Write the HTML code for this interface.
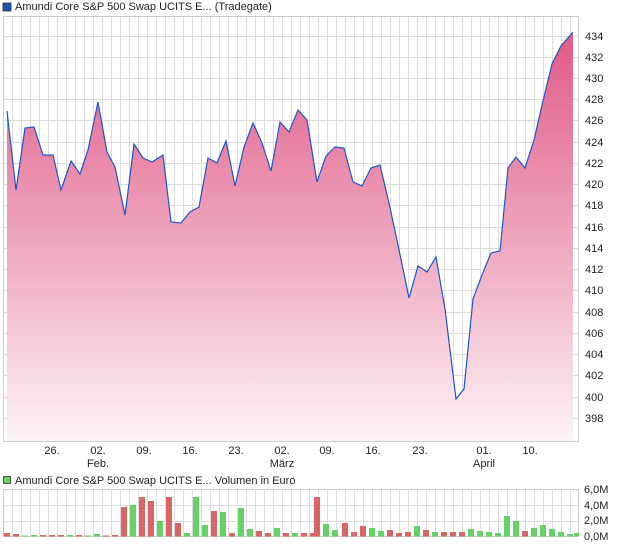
<!DOCTYPE html>
<html><head><meta charset="utf-8"><style>
html,body{margin:0;padding:0;background:#fff;}
svg{display:block;font-family:"Liberation Sans",Arial,sans-serif;}
</style></head><body>
<svg width="620" height="546" viewBox="0 0 620 546" xmlns="http://www.w3.org/2000/svg">
<defs>
<pattern id="vg" x="3" y="0" width="9" height="600" patternUnits="userSpaceOnUse">
<rect x="0" y="0" width="1" height="600" fill="#dcdcdc"/></pattern>
<linearGradient id="fg" x1="0" y1="32" x2="0" y2="441" gradientUnits="userSpaceOnUse">
<stop offset="0" stop-color="#e05a88"/><stop offset="0.5" stop-color="#eea4bd"/><stop offset="1" stop-color="#fdf3f6"/></linearGradient>
</defs>
<rect x="3" y="15" width="8" height="8" fill="#1f4fb0" stroke="#333" stroke-width="0.8" transform="translate(0,-12)"/>
<text x="15" y="10" font-size="11" fill="#222">Amundi Core S&amp;P 500 Swap UCITS E... (Tradegate)</text>
<!-- price plot -->
<rect x="3" y="16" width="576" height="426" fill="url(#vg)"/>
<g stroke="#dcdcdc" stroke-width="1">
<line x1="3" y1="36.5" x2="579" y2="36.5"/><line x1="3" y1="57.5" x2="579" y2="57.5"/><line x1="3" y1="78.5" x2="579" y2="78.5"/><line x1="3" y1="99.5" x2="579" y2="99.5"/><line x1="3" y1="120.5" x2="579" y2="120.5"/><line x1="3" y1="142.5" x2="579" y2="142.5"/><line x1="3" y1="163.5" x2="579" y2="163.5"/><line x1="3" y1="184.5" x2="579" y2="184.5"/><line x1="3" y1="205.5" x2="579" y2="205.5"/><line x1="3" y1="227.5" x2="579" y2="227.5"/><line x1="3" y1="248.5" x2="579" y2="248.5"/><line x1="3" y1="269.5" x2="579" y2="269.5"/><line x1="3" y1="290.5" x2="579" y2="290.5"/><line x1="3" y1="312.5" x2="579" y2="312.5"/><line x1="3" y1="333.5" x2="579" y2="333.5"/><line x1="3" y1="354.5" x2="579" y2="354.5"/><line x1="3" y1="375.5" x2="579" y2="375.5"/><line x1="3" y1="397.5" x2="579" y2="397.5"/><line x1="3" y1="418.5" x2="579" y2="418.5"/>
</g>
<polygon fill="url(#fg)" points="7,441 7,111 16,190 25,128 34,127 43,155 53,155 61,190 71,161 80,174 88,150 98,102 107,152 115,167 125,215 134,144 143,158 152,162 163,155 171,222 181,223 190,212 199,207 208,158 217,163 226,141 235,186 244,147 253,123 262,143 271,171 280,122 289,132 298,110 307,120 317,182 326,156 335,147 344,148 353,182 362,186 371,168 380,165 389,203 398,245 409,298 418,266 427,272 436,257 445,309 456,399 464,389 473,299 482,275 491,253 500,251 508,168 516,157 525,168 534,140 543,101 552,64 561,46 573,32 573,441"/>
<polyline fill="none" stroke="#1f55c8" stroke-width="1.2" points="7,111 16,190 25,128 34,127 43,155 53,155 61,190 71,161 80,174 88,150 98,102 107,152 115,167 125,215 134,144 143,158 152,162 163,155 171,222 181,223 190,212 199,207 208,158 217,163 226,141 235,186 244,147 253,123 262,143 271,171 280,122 289,132 298,110 307,120 317,182 326,156 335,147 344,148 353,182 362,186 371,168 380,165 389,203 398,245 409,298 418,266 427,272 436,257 445,309 456,399 464,389 473,299 482,275 491,253 500,251 508,168 516,157 525,168 534,140 543,101 552,64 561,46 573,32"/>
<rect x="3.5" y="16.5" width="575" height="425" fill="none" stroke="#cccccc"/>
<g font-size="11" fill="#222">
<text x="585" y="40">434</text><text x="585" y="61">432</text><text x="585" y="82">430</text><text x="585" y="103">428</text><text x="585" y="124">426</text><text x="585" y="146">424</text><text x="585" y="167">422</text><text x="585" y="188">420</text><text x="585" y="209">418</text><text x="585" y="231">416</text><text x="585" y="252">414</text><text x="585" y="273">412</text><text x="585" y="294">410</text><text x="585" y="316">408</text><text x="585" y="337">406</text><text x="585" y="358">404</text><text x="585" y="379">402</text><text x="585" y="401">400</text><text x="585" y="422">398</text>
</g>
<g font-size="11" fill="#222" text-anchor="middle">
<text x="52" y="454">26.</text><text x="98" y="454">02.</text><text x="144" y="454">09.</text><text x="190" y="454">16.</text><text x="236" y="454">23.</text><text x="282" y="454">02.</text><text x="327" y="454">09.</text><text x="373" y="454">16.</text><text x="420" y="454">23.</text><text x="484" y="454">01.</text><text x="530" y="454">10.</text>
<text x="98" y="467">Feb.</text><text x="282" y="467">März</text><text x="484" y="467">April</text>
</g>
<!-- volume -->
<rect x="3.5" y="476.5" width="7" height="7" fill="#66d166" stroke="#333" stroke-width="0.8"/>
<text x="15" y="484" font-size="11" fill="#222">Amundi Core S&amp;P 500 Swap UCITS E... Volumen in Euro</text>
<rect x="3" y="490" width="576" height="47" fill="url(#vg)"/>
<g stroke="#dcdcdc"><line x1="3" y1="505.5" x2="579" y2="505.5"/><line x1="3" y1="521.5" x2="579" y2="521.5"/></g>
<g id="bars"></g>
<rect x="3.5" y="489.5" width="575" height="47" fill="none" stroke="#cccccc"/>
<g font-size="11" fill="#222">
<text x="584" y="493">6,0M</text><text x="584" y="509">4,0M</text><text x="584" y="524">2,0M</text><text x="584" y="540">0,0M</text>
</g>
<g>
<script>/*no-op*/</script>
</g>
<g fill="#d96666">
<rect x="4" y="533" width="6" height="3.5"/><rect x="13" y="534" width="6" height="2.5"/>
<rect x="40" y="535" width="6" height="1.5"/><rect x="49" y="535" width="6" height="1.5"/><rect x="58" y="535" width="6" height="1.5"/><rect x="76" y="535" width="6" height="1.5"/>
<rect x="103" y="535.5" width="6" height="1"/><rect x="112" y="535" width="6" height="1.5"/>
<rect x="121" y="507" width="6" height="29.5"/><rect x="139" y="497" width="6" height="39.5"/><rect x="148" y="501" width="6" height="35.5"/>
<rect x="166" y="497" width="6" height="39.5"/><rect x="175" y="523" width="6" height="13.5"/>
<rect x="211" y="511" width="6" height="25.5"/><rect x="229" y="533" width="6" height="3.5"/>
<rect x="256" y="531" width="6" height="5.5"/><rect x="265" y="533" width="6" height="3.5"/><rect x="283" y="533" width="6" height="3.5"/>
<rect x="301" y="533" width="6" height="3.5"/><rect x="310" y="533" width="6" height="3.5"/><rect x="314" y="497" width="6" height="39.5" fill="#d96666"/>
<rect x="342" y="523" width="6" height="13.5"/><rect x="351" y="532" width="6" height="4.5"/><rect x="360" y="526" width="6" height="10.5"/>
<rect x="387" y="530" width="6" height="6.5"/><rect x="396" y="533" width="6" height="3.5"/><rect x="405" y="532" width="6" height="4.5"/>
<rect x="423" y="530" width="6" height="6.5"/><rect x="441" y="532" width="6" height="4.5"/><rect x="450" y="532" width="6" height="4.5"/><rect x="459" y="532" width="6" height="4.5"/>
<rect x="522" y="531" width="6" height="5.5"/>
</g>
<g fill="#66d166">
<rect x="22" y="535.5" width="6" height="1"/><rect x="31" y="535" width="6" height="1.5"/><rect x="67" y="535" width="6" height="1.5"/>
<rect x="85" y="535.5" width="6" height="1"/><rect x="94" y="534" width="6" height="2.5"/>
<rect x="130" y="505" width="6" height="31.5"/><rect x="157" y="521" width="6" height="15.5"/><rect x="184" y="533" width="6" height="3.5"/>
<rect x="193" y="497" width="6" height="39.5"/><rect x="202" y="525" width="6" height="11.5"/><rect x="220" y="512" width="6" height="24.5"/>
<rect x="238" y="508" width="6" height="28.5"/><rect x="247" y="529" width="6" height="7.5"/><rect x="274" y="528" width="6" height="8.5"/>
<rect x="292" y="533" width="6" height="3.5"/>
<rect x="323" y="524" width="6" height="12.5"/><rect x="332" y="530" width="6" height="6.5"/>
<rect x="369" y="528" width="6" height="8.5"/><rect x="378" y="531" width="6" height="5.5"/><rect x="414" y="526" width="6" height="10.5"/>
<rect x="432" y="532" width="6" height="4.5"/><rect x="468" y="529" width="6" height="7.5"/><rect x="477" y="531" width="6" height="5.5"/>
<rect x="486" y="532" width="6" height="4.5"/><rect x="495" y="533" width="6" height="3.5"/><rect x="504" y="516" width="6" height="20.5"/>
<rect x="513" y="521" width="6" height="15.5"/><rect x="531" y="528" width="6" height="8.5"/><rect x="540" y="525" width="6" height="11.5"/>
<rect x="549" y="529" width="6" height="7.5"/><rect x="558" y="532" width="6" height="4.5"/><rect x="567" y="534" width="6" height="2.5"/><rect x="574" y="533" width="5" height="3.5"/>
</g>
</svg>
</body></html>
